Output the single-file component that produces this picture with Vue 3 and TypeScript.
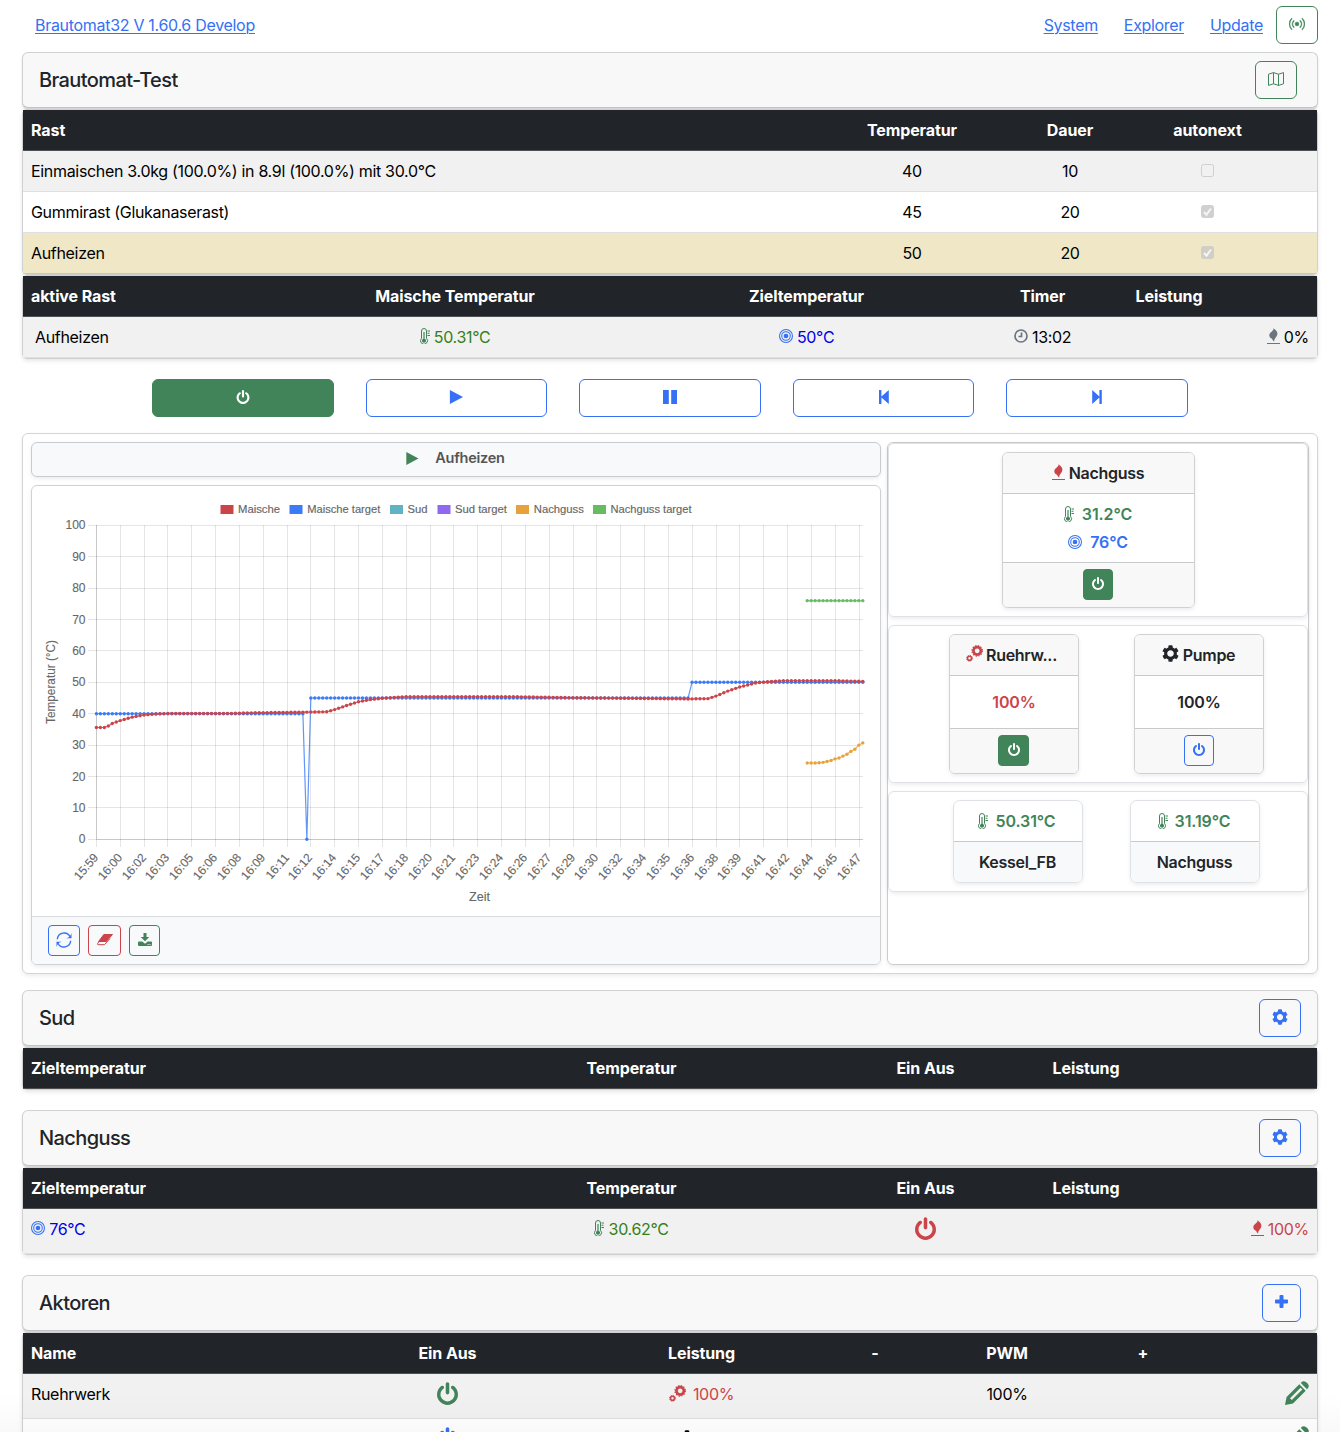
<script setup lang="ts">
interface Rest { name: string; temp: number; time: number; auto: boolean }
interface Series { name: string; color: string; sx: number; tx: number; tw: number; from: number; values: number[] }

const rests: Rest[] = [
  { name: 'Einmaischen 3.0kg (100.0%) in 8.9l (100.0%) mit 30.0°C', temp: 40, time: 10, auto: false },
  { name: 'Gummirast (Glukanaserast)', temp: 45, time: 20, auto: true },
  { name: 'Aufheizen', temp: 50, time: 20, auto: true },
]
const controls = ['power', 'play', 'pause', 'prev', 'next']

const times = ['15:59', '16:00', '16:02', '16:03', '16:05', '16:06', '16:08', '16:09', '16:11', '16:12', '16:14', '16:15', '16:17', '16:18', '16:20', '16:21', '16:23', '16:24', '16:26', '16:27', '16:29', '16:30', '16:32', '16:34', '16:35', '16:36', '16:38', '16:39', '16:41', '16:42', '16:44', '16:45', '16:47']
const levels = [100, 90, 80, 70, 60, 50, 40, 30, 20, 10, 0]

const px = (i: number) => +(96.4 + 3.971 * i).toFixed(2)
const py = (v: number) => +(839.3 - 3.14 * v).toFixed(2)
const gx = (i: number) => Math.round(96 + 23.83 * i) + 0.5
const gy = (v: number) => Math.floor(py(v)) + 0.5

// Linear interpolation between [sample index, temperature] key points
function curve(keys: [number, number][]): number[] {
  const out: number[] = []
  for (let k = 0; k < keys.length - 1; k++) {
    const [a, va] = keys[k]
    const [b, vb] = keys[k + 1]
    for (let i = a; i < b; i++) out.push(va + ((vb - va) * (i - a)) / (b - a))
  }
  out.push(keys[keys.length - 1][1])
  return out
}

const series: Series[] = [
  { name: 'Maische', color: '#cb444a', sx: 220.5, tx: 238, tw: 42, from: 0, values: curve([[0, 35.6], [2, 35.6], [3, 36.1], [4, 36.9], [6, 37.8], [9, 38.9], [12, 39.6], [15, 39.9], [18, 40.1], [34, 40.1], [40, 40.3], [52, 40.5], [58, 40.6], [60, 41.3], [63, 42.6], [66, 43.8], [69, 44.5], [72, 44.9], [75, 45.2], [78, 45.4], [105, 45.4], [120, 45.1], [149, 44.7], [154, 44.8], [156, 45.6], [159, 47.2], [162, 48.5], [166, 49.8], [169, 50.2], [173, 50.5], [186, 50.5], [193, 50.3]]) },
  { name: 'Maische target', color: '#3b7cf6', sx: 289.5, tx: 307.3, tw: 73, from: 0, values: [...Array(53).fill(40), 0, ...Array(96).fill(45), ...Array(44).fill(50)] },
  { name: 'Sud', color: '#60b3c3', sx: 390, tx: 407.6, tw: 20, from: 0, values: [] },
  { name: 'Sud target', color: '#8f69f2', sx: 437.5, tx: 455, tw: 52, from: 0, values: [] },
  { name: 'Nachguss', color: '#e8a23d', sx: 516, tx: 533.8, tw: 50, from: 179, values: [24.3, 24.3, 24.3, 24.4, 24.5, 24.8, 25.1, 25.6, 25.9, 26.5, 27.1, 28, 28.7, 30, 30.7] },
  { name: 'Nachguss target', color: '#67bb63', sx: 593, tx: 610.5, tw: 81, from: 179, values: Array(15).fill(76) },
]
const drawn = [series[5], series[4], series[1], series[0]]
const line = (s: Series) => s.values.map((v, i) => `${px(s.from + i)},${py(v)}`).join(' ')
</script>

<template>
  <svg class="defs" aria-hidden="true">
    <symbol id="i-power" viewBox="128 0 1536 1664"><path d="M1664 896q0 156-61 298t-164 245-245 164-298 61-298-61-245-164-164-245-61-298q0-182 80.500-343t226.500-270q43-32 95.500-25t83.500 50q32 42 24.500 94.500t-49.500 84.500q-98 74-151.500 181t-53.500 228q0 104 40.500 198.500t109.500 163.500 163.500 109.500 198.500 40.500 198.500-40.500 163.500-109.500 109.500-163.500 40.500-198.500q0-121-53.500-228t-151.500-181q-42-32-49.500-84.500t24.500-94.500q31-43 84-50t95 25q146 109 226.500 270t80.500 343zm-640-768v640q0 52-38 90t-90 38-90-38-38-90v-640q0-52 38-90t90-38 90 38 38 90z" /></symbol>
    <symbol id="i-play" viewBox="0 0 14 14"><path d="M.9 0 14 7 .9 14z" /></symbol>
    <symbol id="i-pause" viewBox="0 0 14 14"><path d="M0 0h5.800v14H0zM8.200 0H14v14H8.200z" /></symbol>
    <symbol id="i-prev" viewBox="0 0 14 14"><path d="M2 0h2.400v6.500L11.800 0v14L4.400 7.500V14H2z" /></symbol>
    <symbol id="i-next" viewBox="0 0 14 14"><path d="M11.800 0h-2.400v6.500L2.200 0v14l7.200-6.500V14h2.400z" /></symbol>
    <symbol id="i-cog" viewBox="0 0 512 512"><path d="M487.400 315.700l-42.600-24.600c4.300-23.200 4.300-47 0-70.200l42.600-24.600c4.900-2.800 7.100-8.600 5.500-14-11.100-35.600-30-67.800-54.700-94.600-3.800-4.100-10-5.100-14.800-2.300L380.800 110c-17.900-15.400-38.500-27.300-60.800-35.100V25.800c0-5.600-3.900-10.500-9.400-11.700-36.700-8.200-74.300-7.800-109.200 0-5.500 1.200-9.400 6.100-9.400 11.700V75c-22.200 7.900-42.800 19.800-60.800 35.100L88.700 85.500c-4.900-2.800-11-1.900-14.800 2.300-24.700 26.700-43.600 58.900-54.700 94.600-1.700 5.400.6 11.200 5.500 14L67.300 221c-4.300 23.200-4.300 47 0 70.200l-42.600 24.600c-4.900 2.800-7.100 8.600-5.500 14 11.100 35.600 30 67.800 54.700 94.600 3.800 4.100 10 5.100 14.800 2.300l42.600-24.600c17.900 15.400 38.500 27.300 60.800 35.100v49.200c0 5.600 3.900 10.500 9.400 11.700 36.700 8.200 74.300 7.800 109.200 0 5.500-1.200 9.400-6.100 9.400-11.700v-49.200c22.200-7.900 42.800-19.800 60.800-35.100l42.600 24.600c4.900 2.800 11 1.900 14.800-2.300 24.700-26.700 43.600-58.900 54.700-94.600 1.500-5.500-.7-11.300-5.600-14.100zM256 356c-55 0-100-45-100-100s45-100 100-100 100 45 100 100-45 100-100 100z" /></symbol>
    <symbol id="i-cogs" viewBox="0 0 16 16"><g fill="none" stroke="currentColor"><circle cx="10.500" cy="5.500" r="3.500" stroke-width="2.500" /><circle cx="10.500" cy="5.500" r="4.900" stroke-width="1.200" stroke-dasharray="1.280 1.285" /><circle cx="3.300" cy="12.500" r="1.900" stroke-width="1.500" /><circle cx="3.300" cy="12.500" r="2.800" stroke-width=".9" stroke-dasharray="1.100 1.100" /></g></symbol>
    <symbol id="i-plus" viewBox="0 0 13 13"><path d="M5.500 0h2q1 0 1 1v3.500H12q1 0 1 1v2q0 1-1 1H8.500V12q0 1-1 1h-2q-1 0-1-1V8.500H1q-1 0-1-1v-2q0-1 1-1h3.500V1q0-1 1-1z" /></symbol>
    <symbol id="i-cast" viewBox="0 0 16 16"><path stroke="currentColor" stroke-width=".3" d="M3.050 3.050a7 7 0 0 0 0 9.900.5.5 0 0 1-.707.707 8 8 0 0 1 0-11.314.5.5 0 0 1 .707.707m2.122 2.122a4 4 0 0 0 0 5.656.5.5 0 1 1-.708.708 5 5 0 0 1 0-7.072.5.5 0 0 1 .708.708m5.656-.708a.5.5 0 0 1 .708 0 5 5 0 0 1 0 7.072.5.5 0 1 1-.708-.708 4 4 0 0 0 0-5.656.5.5 0 0 1 0-.708m2.122-2.120a.5.5 0 0 1 .707 0 8 8 0 0 1 0 11.313.5.5 0 0 1-.707-.707 7 7 0 0 0 0-9.900.5.5 0 0 1 0-.707zM10 8a2 2 0 1 1-4 0 2 2 0 0 1 4 0" /></symbol>
    <symbol id="i-map" viewBox="0 0 16 14"><path d="M.5 2.200 5.500.6l5 1.600 5-1.600v11.200l-5 1.600-5-1.600-5 1.600zM5.500.6v11.200M10.500 2.200v11.200" fill="none" stroke="currentColor" /></symbol>
    <symbol id="i-thermo" viewBox="0 0 10 16"><path d="M1.500 3a2.500 2.500 0 0 1 5 0v7.300a3.500 3.500 0 1 1-5 0z" fill="none" stroke="currentColor" /><path d="M3.400 4h1.200v6.800a2 2 0 1 1-1.200 0zM7.500 2.500H10v1H7.500zM7.500 4.800H9.500v1h-2zM7.500 7H10v1H7.500z" /></symbol>
    <symbol id="i-target" viewBox="0 0 16 16"><g fill="none" stroke="currentColor"><circle cx="8" cy="8" r="7.400" stroke-width="1.200" /><circle cx="8" cy="8" r="4.900" stroke-width="1.200" /></g><circle cx="8" cy="8" r="2.700" /></symbol>
    <symbol id="i-clock" viewBox="0 0 14 14"><path d="M7 1a6 6 0 1 1 0 12A6 6 0 0 1 7 1zM7.500 3.500v4H4.500" fill="none" stroke="currentColor" stroke-width="1.700" /></symbol>
    <symbol id="i-flame" viewBox="0 0 13 16"><path d="M6.800 0C7.500 1.800 10.400 2.600 10.400 5.500 10.400 9 7 10 7.200 13.600 5.200 12.800 6 11.500 4.600 10.600 3.200 9.700 2.300 8.700 2.300 7.200 2.300 4.300 6.600 3.500 6.800 0zM0 15h13v1H0z" /></symbol>
    <symbol id="i-pencil" viewBox="0 0 24 24"><path fill-rule="evenodd" d="M0 24l1.600-8L14.300 3.300l6.400 6.400L8 22.400zM5 17.200l1.800 1.800L17.300 8.500l-1.800-1.800z" /><path d="M15.800 1.900l1.100-1.100q1.200-1 3-.4 2.900 1 3.700 3.700.4 1.700-.5 2.900l-1.100 1.200z" /></symbol>
    <symbol id="i-refresh" viewBox="0 0 16 16"><path d="M1.300 7.200A6.800 6.800 0 0 1 14 4.500M14.700 8.800A6.800 6.800 0 0 1 2 11.500" fill="none" stroke="currentColor" stroke-width="1.400" /><path d="M15.500 1v5.300h-5.300l2.200-.9 2.200-2.200zM.5 15V9.700h5.300l-2.200.9-2.200 2.200z" /></symbol>
    <symbol id="i-eraser" viewBox="0 0 16 12"><path d="M6.800.5H15.500L9.300 7.500H1.600z" stroke="currentColor" /><path d="M2.800 6.200.6 9.700q-.4 1 .6 1H7.500L13 4.500" fill="none" stroke="currentColor" /></symbol>
    <symbol id="i-download" viewBox="0 0 14 13"><path d="M5.500 0h3v4h2.800L7 8.300 2.700 4h2.800z" /><path fill-rule="evenodd" d="M1 8.500h3.300L7 10.800l2.700-2.300H13q1 0 1 1V12q0 1-1 1H1q-1 0-1-1V9.500q0-1 1-1zM9.500 11v1h1v-1zm2 0v1h1v-1z" /></symbol>
  </svg>

  <main class="page">
    <nav class="top">
      <a class="brand">Brautomat32 V 1.60.6 Develop</a>
      <a>System</a><a>Explorer</a><a>Update</a>
      <button class="btn green"><svg class="ic s16"><use href="#i-cast" /></svg></button>
    </nav>

    <header class="bar wide">
      <h5>Brautomat-Test</h5>
      <button class="btn green"><svg class="ic map"><use href="#i-map" /></svg></button>
    </header>
    <section class="table t1">
      <div class="row head"><b>Rast</b><b>Temperatur</b><b>Dauer</b><b>autonext</b></div>
      <div v-for="(r, i) in rests" :key="r.name" class="row" :class="{ odd: i === 0, active: i === 2 }">
        <span>{{ r.name }}</span><span>{{ r.temp }}</span><span>{{ r.time }}</span>
        <span class="checkcell"><i class="check" :class="{ on: r.auto }"><svg v-if="r.auto" viewBox="0 0 13 13"><path d="M3 7l2.500 2.700L10 3.500" /></svg></i></span>
      </div>
    </section>
    <section class="table t2">
      <div class="row head"><b>aktive Rast</b><b>Maische Temperatur</b><b>Zieltemperatur</b><b>Timer</b><b>Leistung</b></div>
      <div class="row odd">
        <span class="indent">Aufheizen</span>
        <span class="tgreen"><svg class="ic thermo"><use href="#i-thermo" /></svg> 50.31°C</span>
        <span class="tblue"><svg class="ic target"><use href="#i-target" /></svg> 50°C</span>
        <span><svg class="ic clock"><use href="#i-clock" /></svg> 13:02</span><span></span>
        <span class="right"><svg class="ic flame grey"><use href="#i-flame" /></svg> 0%</span>
      </div>
    </section>

    <div class="controls">
      <button v-for="(c, i) in controls" :key="c" class="btn" :class="{ solid: i === 0 }"><svg class="ic s14"><use :href="'#i-' + c" /></svg></button>
    </div>

    <section class="board">
      <div class="left">
        <div class="step"><svg class="ic s14"><use href="#i-play" /></svg><span>Aufheizen</span></div>
        <div class="chart">
          <svg class="plot" viewBox="32 486 848 430" width="848" height="430">
            <g v-for="s in series" :key="s.name">
              <rect :x="s.sx" y="505" width="13" height="9" :fill="s.color" />
              <text class="legend" :x="s.tx" y="513" :textLength="s.tw" lengthAdjust="spacingAndGlyphs">{{ s.name }}</text>
            </g>
            <g class="grid">
              <path v-for="v in levels" :key="v" :d="`M88 ${gy(v)}H863`" />
              <path v-for="(t, i) in times" :key="t" :d="`M${gx(i)} 525V847`" />
            </g>
            <path class="axis" d="M96.500 525V839.500H863" />
            <text v-for="v in levels" :key="'y' + v" class="tick" x="85.500" :y="py(v) + 4" text-anchor="end">{{ v }}</text>
            <text v-for="(t, i) in times" :key="'x' + t" class="tick" text-anchor="end" :transform="`translate(${gx(i) + 2.5} 858) rotate(-49)`">{{ t }}</text>
            <text class="tick" text-anchor="middle" transform="translate(55 682) rotate(-90)" textLength="84" lengthAdjust="spacingAndGlyphs">Temperatur (°C)</text>
            <text class="tick" text-anchor="middle" x="479.500" y="900.600" textLength="21" lengthAdjust="spacingAndGlyphs">Zeit</text>
            <g v-for="s in drawn" :key="'l' + s.name">
              <polyline :points="line(s)" :stroke="s.color" fill="none" stroke-width="1.200" opacity=".8" />
              <circle v-for="(v, i) in s.values" :key="i" :cx="px(s.from + i)" :cy="py(v)" r="1.700" :fill="s.color" />
            </g>
          </svg>
          <footer>
            <button class="btn sm w32"><svg class="ic s16"><use href="#i-refresh" /></svg></button>
            <button class="btn sm red w33"><svg class="ic eraser"><use href="#i-eraser" /></svg></button>
            <button class="btn sm green w31"><svg class="ic dl"><use href="#i-download" /></svg></button>
          </footer>
        </div>
      </div>

      <div class="side">
        <div class="group g1">
          <article class="unit big">
            <h6 class="heat"><svg class="ic flame red"><use href="#i-flame" /></svg>Nachguss</h6>
            <div class="body">
              <p class="c-green"><svg class="ic thermo"><use href="#i-thermo" /></svg>31.2°C</p>
              <p class="c-blue"><svg class="ic target"><use href="#i-target" /></svg>76°C</p>
            </div>
            <footer><button class="btn sm solid"><svg class="ic p12"><use href="#i-power" /></svg></button></footer>
          </article>
        </div>
        <div class="group g2">
          <article class="unit">
            <h6 class="cut"><svg class="ic cogs red"><use href="#i-cogs" /></svg>Ruehrw...</h6>
            <div class="body"><p class="c-red">100%</p></div>
            <footer><button class="btn sm w31 solid"><svg class="ic p12"><use href="#i-power" /></svg></button></footer>
          </article>
          <article class="unit">
            <h6><svg class="ic s17"><use href="#i-cog" /></svg>Pumpe</h6>
            <div class="body"><p>100%</p></div>
            <footer><button class="btn sm"><svg class="ic p12"><use href="#i-power" /></svg></button></footer>
          </article>
        </div>
        <div class="group g3">
          <article class="sensor"><p><svg class="ic thermo"><use href="#i-thermo" /></svg>50.31°C</p><h6>Kessel_FB</h6></article>
          <article class="sensor"><p><svg class="ic thermo"><use href="#i-thermo" /></svg>31.19°C</p><h6>Nachguss</h6></article>
        </div>
      </div>
    </section>

    <header class="bar sud"><h5>Sud</h5><button class="btn"><svg class="ic s16"><use href="#i-cog" /></svg></button></header>
    <section class="table t3">
      <div class="row head"><b>Zieltemperatur</b><b>Temperatur</b><b>Ein Aus</b><b>Leistung</b></div>
    </section>

    <header class="bar next"><h5>Nachguss</h5><button class="btn"><svg class="ic s16"><use href="#i-cog" /></svg></button></header>
    <section class="table t3">
      <div class="row head"><b>Zieltemperatur</b><b>Temperatur</b><b>Ein Aus</b><b>Leistung</b></div>
      <div class="row odd tall">
        <span class="tblue"><svg class="ic target"><use href="#i-target" /></svg> 76°C</span>
        <span class="tgreen"><svg class="ic thermo"><use href="#i-thermo" /></svg> 30.62°C</span>
        <span><svg class="ic pbig red"><use href="#i-power" /></svg></span><span></span>
        <span class="right red"><svg class="ic flame"><use href="#i-flame" /></svg> 100%</span>
      </div>
    </section>

    <header class="bar next"><h5>Aktoren</h5><button class="btn w39"><svg class="ic plus"><use href="#i-plus" /></svg></button></header>
    <section class="table t4">
      <div class="row head"><b>Name</b><b>Ein Aus</b><b>Leistung</b><b>-</b><b>PWM</b><b>+</b></div>
      <div class="row odd tall">
        <span>Ruehrwerk</span>
        <span><svg class="ic pbig green"><use href="#i-power" /></svg></span>
        <span class="red load"><svg class="ic cogs"><use href="#i-cogs" /></svg>100%</span><span></span>
        <span>100%</span><span></span>
        <span class="right"><svg class="ic pencil"><use href="#i-pencil" /></svg></span>
      </div>
      <div class="row tall">
        <span></span>
        <span><svg class="ic pbig blue"><use href="#i-power" /></svg></span>
        <span class="load single"><svg class="ic cog-l"><use href="#i-cog" /></svg></span><span></span>
        <span></span><span></span>
        <span class="right"><svg class="ic pencil"><use href="#i-pencil" /></svg></span>
      </div>
    </section>
  </main>
</template>

<style>
body { margin: 0; background: #fff; }
</style>

<style scoped>
* { box-sizing: border-box; }
.defs { position: absolute; width: 0; height: 0; }
.page { width: 1340px; height: 1432px; overflow: hidden; padding: 0 22px; font: 16px/24px Inter, "Liberation Sans", sans-serif; letter-spacing: -.32px; color: #212529; position: relative; }
.page::after { content: ""; position: absolute; left: 0; right: 0; bottom: 0; height: 40px; background: linear-gradient(transparent, rgba(0, 0, 0, .022)); }
.ic { fill: currentColor; flex: none; display: inline-block; }
.s17 { width: 17px; height: 17px; }
.s16 { width: 16px; height: 16px; }
.s14 { width: 14px; height: 14px; }
.p12 { width: 12px; height: 13px; }
.map { width: 16px; height: 14px; }
.thermo { width: 10px; height: 16px; vertical-align: -1px; }
.target { width: 14px; height: 14px; color: #3570f5; vertical-align: 0; }
.clock { width: 14px; height: 14px; color: #6c757d; vertical-align: 0; }
.flame { width: 13px; height: 16px; vertical-align: -1px; }
.cogs { width: 17px; height: 17px; }
.plus { width: 13px; height: 13px; }
.grey { color: #6c757d; }
.red { color: #cb444a; }
.green { color: #418459; }
.blue { color: #3570f5; }

.top { display: flex; align-items: center; height: 52px; padding: 0 0 2px 13px; gap: 26px; }
.top a { color: #3570f5; text-decoration: underline; text-decoration-thickness: 1px; text-underline-offset: 2px; }
.top .brand { margin-right: auto; letter-spacing: -.3px; }
.top .btn { margin-left: -13px; }
.btn { display: flex; align-items: center; justify-content: center; width: 42px; height: 38px; padding: 0 0 3px; border: 1px solid #3570f5; border-radius: 6px; background: transparent; color: #3570f5; }
.btn.green { border-color: #418459; color: #418459; }
.btn.red { border-color: #cb444a; color: #cb444a; }
.btn.solid { background: #418459; border-color: #418459; color: #fff; }
.btn.sm { width: 30px; height: 31px; border-radius: 4px; padding-bottom: 2px; }
.btn.w32 { width: 32px; }
.btn.w33 { width: 33px; }
.btn.w31 { width: 31px; }
.btn.w39 { width: 39px; }

.bar { height: 56px; border: 1px solid #d0d1d2; border-bottom-color: #c2c3c4; border-radius: 6px; background: #f8f8f8; display: flex; align-items: center; justify-content: space-between; padding: 0 16px; box-shadow: 0 2px 2px rgba(0, 0, 0, .16); margin-bottom: 1px; }
.bar.wide { padding-right: 20px; }
.bar.next { margin-top: 20px; }
.bar.sud { margin-top: 16px; }
h5 { margin: 0; font-size: 20px; font-weight: 500; letter-spacing: -.6px; }

.table { border: 1px solid #cfd0d1; border-radius: 5px; box-shadow: 0 2px 4px rgba(0, 0, 0, .1); color: #000; }
.row { display: grid; height: 41px; padding-top: 8px; border-bottom: 1px solid #dee0e3; background: #fff; white-space: nowrap; }
.row.tall { height: 45px; }
.row > * { text-align: center; }
.row > :first-child { text-align: left; padding-left: 8px; }
.row > .indent:first-child { padding-left: 12px; }
.row > .right { text-align: right; padding-right: 8px; }
.head { background: #212529; color: #fff; border-bottom-color: #4d5154; }
.head b { font-weight: 700; letter-spacing: -.1px; }
.odd { background: #f1f1f1; }
.active { background: #f0e7c6; border-bottom-color: #d2c9a6; }
.tgreen { color: #358017; }
.tgreen .ic { color: #418459; }
.tblue { color: #0000e8; }
.t1 .row { grid-template-columns: 801px 176px 140px 135px 42px; }
.t2 .row { grid-template-columns: 267px 330px 373px 99px 154px 71px; }
.t3 .row { grid-template-columns: 440px 337px 251px 70px 196px; }
.t4 .row { grid-template-columns: 324px 201px 307px 40px 224px 48px 150px; }
.checkcell { display: flex; justify-content: center; }
.check { width: 13px; height: 13px; margin-top: 5px; border: 1px solid #cfcfcf; border-radius: 2.500px; display: block; }
.check.on { background: #d0d0d0; border-color: #d0d0d0; }
.check svg { display: block; width: 13px; height: 13px; margin: -1px; fill: none; stroke: #f6f6f6; stroke-width: 2; }
.active .check { background: #d0cec6; border-color: #d0cec6; }
.pbig { width: 21px; height: 23px; }
.load { display: flex; justify-content: center; align-items: center; height: 24px; gap: 7px; }
.load .cogs { margin-bottom: 2px; }
.cog-l { width: 18px; height: 18px; }
.load.single { padding-right: 29px; }
.pencil { width: 24px; height: 24px; color: #418459; position: relative; top: -1px; }

.controls { display: flex; gap: 32px; width: 1036px; margin: 20px auto 16px; }
.controls .btn { flex: 1; width: auto; }

.board { height: 541px; border: 1px solid #d3d4d5; border-radius: 6px; box-shadow: 0 2px 4px rgba(0, 0, 0, .075); padding: 8px; display: flex; gap: 6px; }
.left { width: 850px; display: flex; flex-direction: column; gap: 8px; }
.step { height: 35px; border: 1px solid #c9cbcd; border-radius: 6px; background: #f8f9fb; display: flex; align-items: center; justify-content: center; gap: 16px; padding: 0 2px 3px 0; font-size: 14.500px; font-weight: 600; letter-spacing: -.25px; color: #555; box-shadow: 0 2px 4px rgba(0, 0, 0, .075); }
.step .ic { color: #418459; width: 14px; height: 13px; }
.chart { height: 480px; border: 1px solid #cfd1d3; border-radius: 6px; box-shadow: 0 2px 4px rgba(0, 0, 0, .075); overflow: hidden; display: flex; flex-direction: column; }
.plot { display: block; flex: none; letter-spacing: 0; }
.legend { font: 11px "Liberation Sans", Arial, sans-serif; fill: #666; stroke: #666; stroke-width: .15px; }
.tick { font: 12px "Liberation Sans", Arial, sans-serif; fill: #666; stroke: #666; stroke-width: .1px; }
.grid path { stroke: rgba(0, 0, 0, .1); fill: none; }
.axis { stroke: rgba(0, 0, 0, .13); fill: none; }
.chart footer { flex: 1; border-top: 1px solid #d8dadc; background: #f8f9fb; display: flex; gap: 8px; padding: 8px 16px; }
.eraser { width: 16px; height: 12px; }
.dl { width: 14px; height: 13px; }

.side { width: 422px; border: 1px solid #c9cbcd; border-radius: 6px; box-shadow: 0 2px 4px rgba(0, 0, 0, .075); }
.group { border: 1px solid #dee2e6; border-radius: 6px; box-shadow: 0 2px 4px rgba(0, 0, 0, .075); display: flex; padding: 8px 0; margin-bottom: 8px; }
.g1 { height: 174px; justify-content: center; }
.g2 { height: 158px; padding-left: 60px; gap: 55px; }
.g3 { height: 101px; padding-left: 64px; gap: 47px; }
.unit { width: 130px; height: 140px; border: 1px solid #cfd1d3; border-radius: 6px; box-shadow: 0 2px 4px rgba(0, 0, 0, .075); display: flex; flex-direction: column; overflow: hidden; font-weight: 600; }
.unit.big { width: 193px; height: 156px; }
h6 { margin: 0; height: 41px; font-size: 16px; font-weight: 600; display: flex; align-items: center; justify-content: center; gap: 4px; padding-right: 1px; letter-spacing: -.28px; }
h6.heat { padding-right: 0; }
h6.cut { padding-right: 5px; gap: 3px; }
.unit h6 { background: #f8f8f8; border-bottom: 1px solid #c8cacc; }
.unit h6 .ic { margin-bottom: 3px; }
.body { flex: 1; display: flex; flex-direction: column; justify-content: center; gap: 4px; }
p { margin: 0; display: flex; align-items: center; justify-content: center; gap: 8px; letter-spacing: -.1px; }
.unit p .ic { margin-bottom: 1px; }
.unit footer { height: 45px; border-top: 1px solid #c8cacc; background: #f8f8f8; display: flex; justify-content: center; padding: 6px 1px 0 0; }
.c-green, .sensor p { color: #418459; }
.c-blue { color: #3570f5; }
.c-red { color: #cb444a; }
.sensor { width: 130px; height: 83px; border: 1px solid #dee2e6; border-radius: 7px; box-shadow: 0 2px 4px rgba(0, 0, 0, .075); overflow: hidden; font-weight: 600; }
.sensor p { height: 41px; gap: 7px; border-bottom: 1px solid #c8cacc; padding-right: 2px; }
.sensor h6 { height: 40px; background: #f8f9fb; }
</style>
